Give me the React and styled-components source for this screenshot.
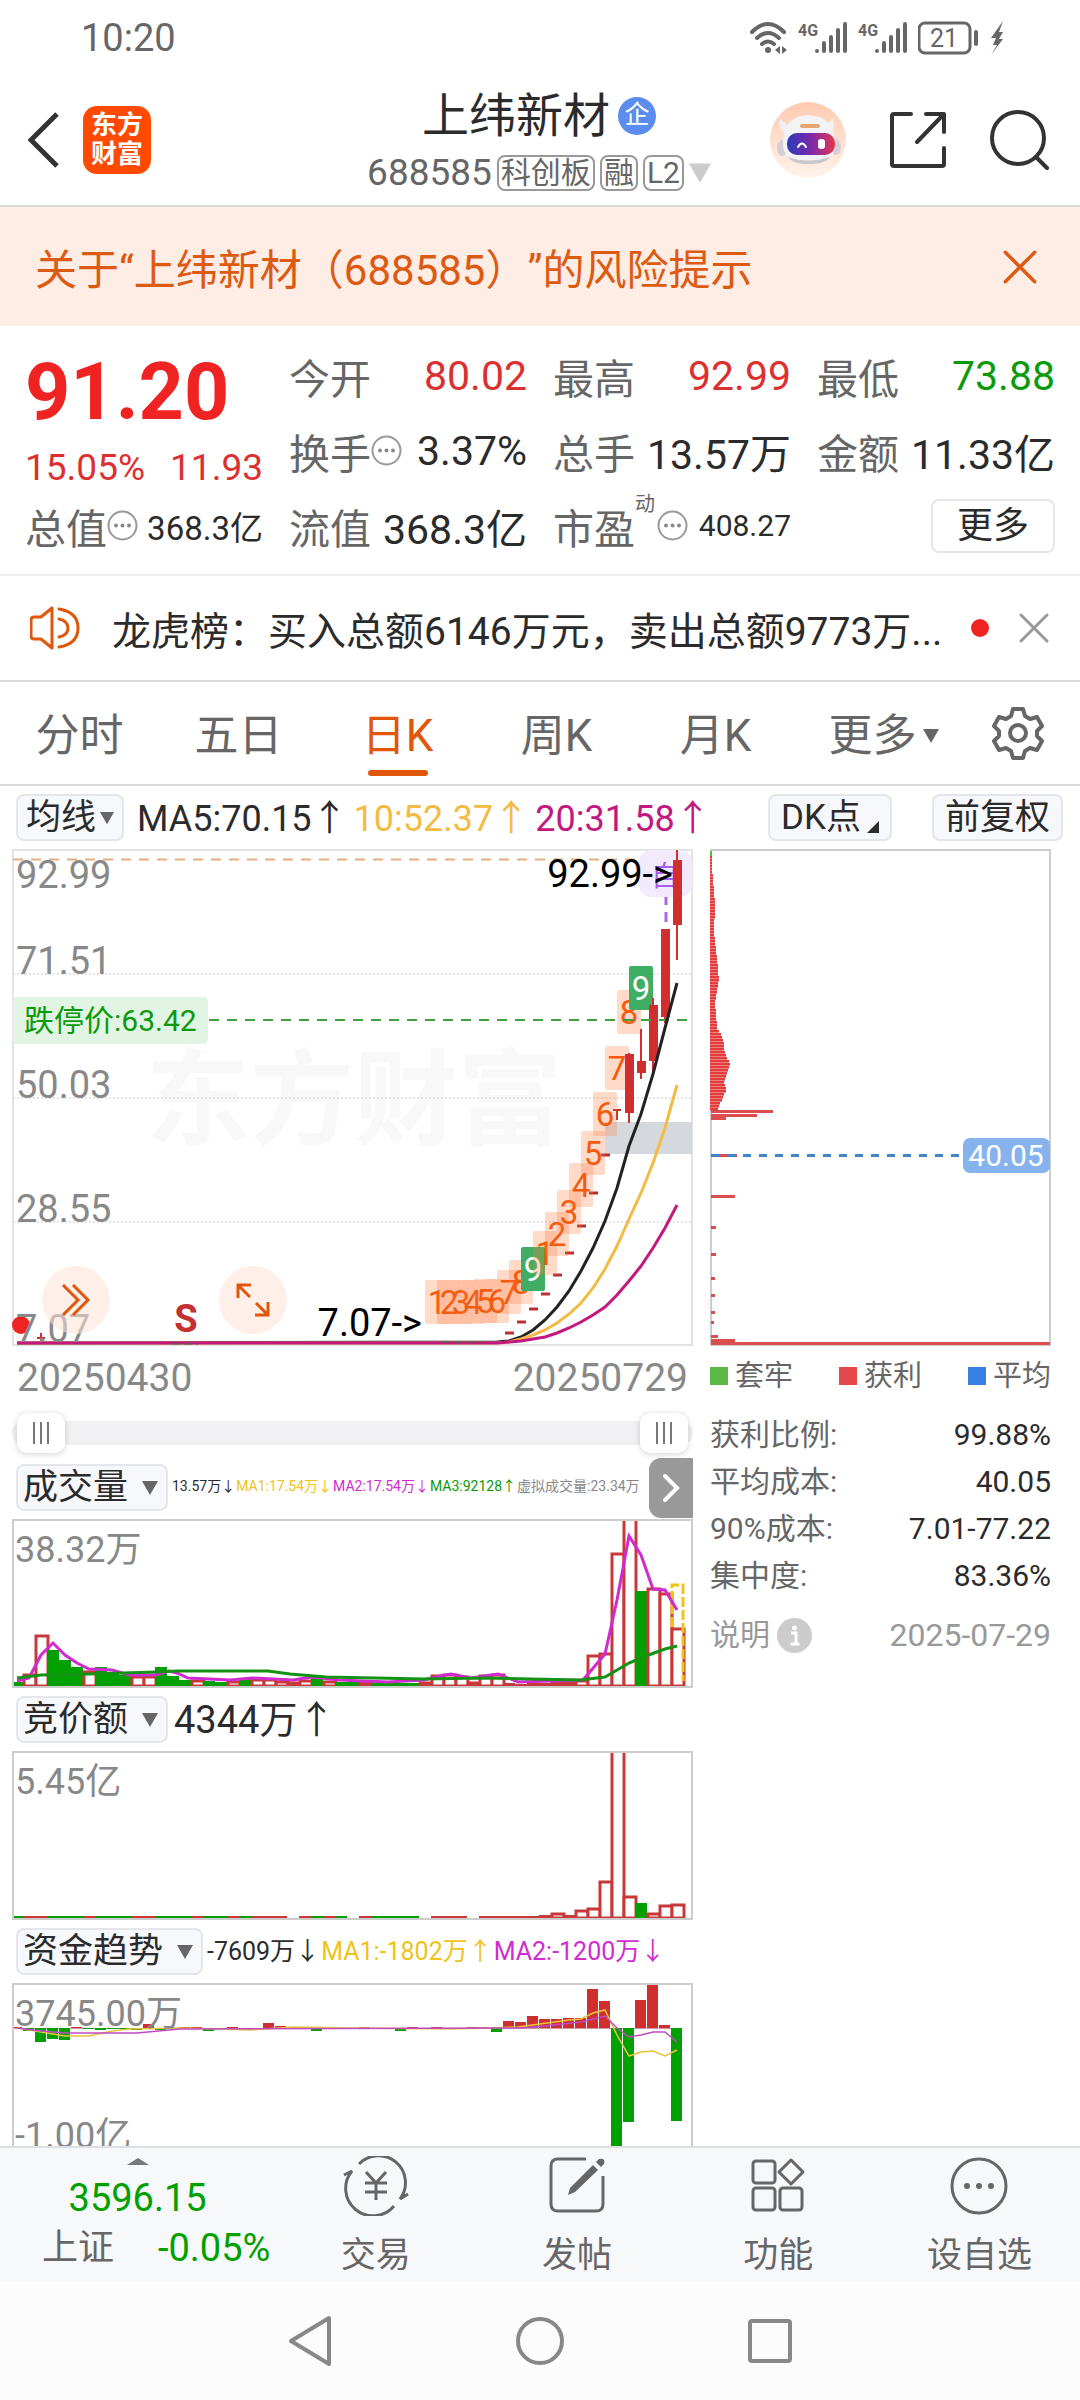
import React, { useState } from 'react';
import styled, { createGlobalStyle } from 'styled-components';

const GlobalStyle = createGlobalStyle`
  * {
    box-sizing: border-box;
  }

  body {
    margin: 0;
    background: #fff;
    color: #2b2b2b;
    font-family: Roboto, 'Noto Sans CJK SC', 'Liberation Sans', sans-serif;
    text-spacing-trim: space-all;
  }

  button,
  select {
    font-family: inherit;
    color: inherit;
    margin: 0;
    padding: 0;
    border: none;
    background: none;
    cursor: pointer;
  }

  svg {
    display: block;
    flex-shrink: 0;
  }
`;

const RED = '#d12e2e';
const GREEN = '#00a000';
const ORANGE = '#e0560b';
const YELLOW = '#efc31a';
const PURPLE = '#d02bd0';

const Shell = styled.div`
  display: flex;
  flex-direction: column;
  height: 100vh;
  overflow: hidden;
`;

const Scroll = styled.main`
  flex: 1;
  min-height: 0;
  overflow: hidden;
`;

// 상태바
const StatusBar = styled.div`
  display: flex;
  align-items: center;
  justify-content: space-between;
  height: 74px;
  padding: 2px 76px 0 81px;
  font-size: 38px;
  color: #666;
`;

const StatusIcons = styled.div`
  display: flex;
  align-items: center;
  gap: 10px;
`;

// 헤더
const Header = styled.header`
  display: grid;
  grid-template-columns: 1fr auto 1fr;
  align-items: center;
  height: 133px;
  padding: 0 30px 0 28px;
  border-bottom: 2px solid #d9d9d9;
`;

const HeaderLeft = styled.div`
  display: flex;
  align-items: center;
  gap: 24px;
`;

const HeaderRight = styled.div`
  display: flex;
  align-items: center;
  justify-content: flex-end;
  gap: 43px;
`;

const AppLogo = styled.a`
  display: flex;
  align-items: center;
  justify-content: center;
  width: 68px;
  height: 68px;
  border-radius: 14px;
  background: #ff4a00;
  color: #fff;
  font-size: 26px;
  line-height: 29px;
  font-weight: 700;
  text-align: center;
  text-decoration: none;
`;

const StockTitle = styled.div`
  display: flex;
  flex-direction: column;
  align-items: center;
  padding-top: 5px;
`;

const StockName = styled.h1`
  display: flex;
  align-items: center;
  gap: 8px;
  margin: 0;
  font-size: 47px;
  line-height: 62px;
  font-weight: 400;
`;

const Badge = styled.span`
  width: 38px;
  height: 38px;
  border-radius: 50%;
  background: #5b8dee;
  color: #fff;
  font-size: 25px;
  line-height: 36px;
  text-align: center;
`;

const StockCode = styled.div`
  display: flex;
  align-items: center;
  gap: 5px;
  font-size: 37px;
  line-height: 52px;
  color: #666;
`;

const Tag = styled.span`
  height: 36px;
  padding: 0 2px;
  border: 2px solid #999;
  border-radius: 8px;
  font-size: 30px;
  line-height: 32px;
`;

const IconButton = styled.button`
  display: flex;
  align-items: center;
  justify-content: center;
`;

// 위험 안내 배너
const Notice = styled.div`
  display: flex;
  align-items: center;
  justify-content: space-between;
  height: 119px;
  padding: 0 43px 0 35px;
  background: #fdede4;
  color: #dc5a12;
  font-size: 42px;
`;

// 시세
const QuoteGrid = styled.section`
  display: grid;
  grid-template-columns: repeat(4, 1fr);
  grid-auto-rows: 75px;
  column-gap: 26px;
  height: 250px;
  padding: 12px 25px 0;
  border-bottom: 2px solid #eee;
`;

const PriceBox = styled.div`
  grid-row: span 2;
  display: flex;
  flex-direction: column;
  justify-content: space-between;
  color: #f02323;
`;

const Price = styled.strong`
  font-size: 79px;
  line-height: 108px;
`;

const Change = styled.div`
  display: flex;
  justify-content: space-between;
  font-size: 37px;
  line-height: 40px;
  color: #dc3030;
`;

const QuoteCell = styled.div`
  display: flex;
  align-items: center;
  white-space: nowrap;
`;

const QuoteLabel = styled.span`
  position: relative;
  font-size: 41px;
  color: #666;
`;

const QuoteSup = styled.sup`
  position: absolute;
  left: 100%;
  top: -4px;
  font-size: 20px;
  line-height: 24px;
`;

const SupGap = styled.span`
  width: 22px;
`;

const QuoteValue = styled.span`
  margin-left: auto;
  font-size: ${(props) => props.$size || 41}px;
  color: ${(props) => props.$color || '#2b2b2b'};
`;

const MoreButton = styled.button`
  width: 124px;
  height: 54px;
  margin-left: auto;
  border: 2px solid #e6e6e6;
  border-radius: 8px;
  font-size: 36px;
  line-height: 48px;
`;

const NewsRow = styled.div`
  display: flex;
  align-items: center;
  height: 106px;
  padding: 0 31px 0 30px;
  border-bottom: 2px solid #d9d9d9;
`;

const NewsText = styled.a`
  flex: 1;
  min-width: 0;
  margin: 0 24px 0 32px;
  color: inherit;
  font-size: 39px;
  text-decoration: none;
  white-space: nowrap;
`;

const RedDot = styled.span`
  width: 18px;
  height: 18px;
  margin-right: 30px;
  border-radius: 50%;
  background: #f02323;
`;

// 기간 탭
const Tabs = styled.nav`
  display: grid;
  grid-template-columns: repeat(5, 159fr) 177fr 92fr;
  height: 104px;
  padding-right: 16px;
  border-bottom: 2px solid #d9d9d9;
`;

const Tab = styled.button`
  display: flex;
  flex-direction: column;
  align-items: center;
  justify-content: flex-end;
  gap: 4px;
  padding-bottom: 8px;
  font-size: 44px;
  line-height: 60px;
  color: ${(props) => (props.$active ? ORANGE : '#666')};

  &::after {
    content: '';
    width: 60px;
    height: 6px;
    border-radius: 3px;
    background: ${(props) => (props.$active ? ORANGE : 'transparent')};
  }
`;

const TabText = styled.span`
  display: flex;
  align-items: center;
  gap: 6px;
`;

const Toolbar = styled.div`
  display: flex;
  align-items: center;
  height: 63px;
  padding: 0 17px 0 16px;
  font-size: 36px;
`;

const chip = `
  height: 47px;
  border: 2px solid #e4e6eb;
  border-radius: 8px;
  background: #f7f8fb;
  font-size: 35px;
  line-height: 43px;
`;

const Chip = styled.button`
  ${chip}
  display: flex;
  align-items: center;
  gap: 6px;
  padding: 0 11px;
  white-space: nowrap;
`;

const ToolbarActions = styled.div`
  display: flex;
  gap: 40px;
  margin-left: auto;
`;

const SelectBox = styled.label`
  ${chip}
  display: flex;
  align-items: center;
  padding-right: 8px;
  gap: ${(props) => (props.$tight ? 3 : 13)}px;
`;

const Select = styled.select`
  appearance: none;
  padding-left: ${(props) => (props.$tight ? 8 : 5)}px;
  font-size: 35px;
  line-height: 43px;
  outline: none;
`;

const Readings = styled.div`
  display: flex;
  align-items: baseline;
  gap: ${(props) => props.$gap}px;
  margin-left: ${(props) => props.$start}px;
  padding-bottom: 6px;
  font-size: ${(props) => props.$size}px;
  white-space: nowrap;
`;

const Reading = styled.span`
  color: ${(props) => props.$color || '#2b2b2b'};
`;

// 차트 영역
const ChartArea = styled.section`
  display: grid;
  grid-template-columns: minmax(0, 681fr) minmax(0, 341fr);
  column-gap: 17px;
  padding: 0 29px 0 12px;
`;

const Chart = styled.svg`
  width: 100%;
  height: auto;
  overflow: hidden;
`;

const KLineBox = styled.div`
  position: relative;
`;

const FloatingTools = styled.div`
  position: absolute;
  left: 30px;
  bottom: 12px;
  display: flex;
  gap: 109px;
`;

const RoundButton = styled.button`
  display: flex;
  align-items: center;
  justify-content: center;
  width: 68px;
  height: 68px;
  border-radius: 50%;
  background: rgba(253, 228, 215, 0.55);
`;

const DateRow = styled.div`
  display: flex;
  justify-content: space-between;
  padding: 0 5px 0 5px;
  font-size: 39px;
  line-height: 64px;
  color: #888;
`;

const RangeBox = styled.div`
  position: relative;
  height: 46px;

  &::before {
    content: '';
    position: absolute;
    inset: 11px 0;
    border-radius: 12px;
    background: #f1f1f4;
  }
`;

const RangeInput = styled.input`
  position: absolute;
  left: 5px;
  top: 3px;
  width: calc(100% - 10px);
  height: 40px;
  margin: 0;
  appearance: none;
  background: none;
  pointer-events: none;

  &::-webkit-slider-thumb {
    appearance: none;
    width: 48px;
    height: 40px;
    border-radius: 10px;
    pointer-events: auto;
    box-shadow: 0 1px 6px rgba(0, 0, 0, 0.18);
    background:
      linear-gradient(#777, #777) 16px 9px / 2px 22px no-repeat,
      linear-gradient(#777, #777) 23px 9px / 2px 22px no-repeat,
      linear-gradient(#777, #777) 30px 9px / 2px 22px no-repeat,
      #fff;
  }
`;

const IndicatorHead = styled.div`
  display: flex;
  align-items: center;
  height: 63px;
  padding-left: 4px;
`;

const NextButton = styled.button`
  display: flex;
  align-items: center;
  justify-content: center;
  width: 44px;
  height: 60px;
  margin-left: auto;
  border-radius: 12px 0 0 12px;
  background: #999;
`;

// 매물대 패널
const Legend = styled.div`
  display: flex;
  justify-content: space-between;
  margin-bottom: 5px;
  font-size: 29px;
  line-height: 60px;
  color: #666;
`;

const LegendItem = styled.span`
  display: flex;
  align-items: center;
  gap: 7px;

  &::before {
    content: '';
    width: 18px;
    height: 18px;
    background: ${(props) => props.$color};
  }
`;

const CostTable = styled.table`
  width: 100%;
  border-collapse: collapse;
  font-size: 30px;
  line-height: 47px;

  th {
    padding: 0;
    font-weight: 400;
    text-align: left;
    color: #666;
  }

  td {
    padding: 0;
    text-align: right;
  }
`;

const CostFooter = styled.div`
  display: flex;
  align-items: center;
  gap: 7px;
  margin-top: 6px;
  font-size: 30px;
  line-height: 60px;
  color: #999;

  time {
    margin-left: auto;
    font-size: 32px;
  }
`;

// 하단 메뉴
const BottomNav = styled.nav`
  display: grid;
  grid-template-columns: 275fr repeat(4, 201fr);
  height: 135px;
  border-top: 2px solid #dcdfe4;
  background: #f7f8fa;
`;

const IndexBox = styled.button`
  display: flex;
  flex-direction: column;
  align-items: center;
  padding-top: 10px;
  color: ${GREEN};
`;

const IndexValue = styled.span`
  margin-top: 6px;
  font-size: 38px;
  line-height: 54px;
`;

const IndexRow = styled.span`
  display: flex;
  gap: 44px;
  padding-left: 37px;
  font-size: 38px;
  line-height: 46px;
`;

const Muted = styled.span`
  font-size: 36px;
  color: #666;
`;

const NavItem = styled.button`
  display: flex;
  flex-direction: column;
  align-items: center;
  justify-content: space-between;
  padding-top: 8px;
  font-size: 35px;
  line-height: 51px;
  color: #666;
`;

const SystemBar = styled.div`
  display: grid;
  grid-template-columns: repeat(3, 1fr);
  height: 119px;
  padding: 0 18%;
  background: #fcfcfc;
`;

const barX = (i) => 5 + i * 12;

const Caret = ({ size = 16, color = '#666' }) => (
  <svg width={size} height={size} viewBox='0 0 16 16'>
    <path d='M0 1h16L8 15z' fill={color} />
  </svg>
);

const MoreDots = () => (
  <svg width='31' height='31' viewBox='0 0 31 31'>
    <circle cx='15.5' cy='15.5' r='14' fill='none' stroke='#999' strokeWidth='2' />
    <g fill='#888'>
      <circle cx='9' cy='15.5' r='2' />
      <circle cx='15.5' cy='15.5' r='2' />
      <circle cx='22' cy='15.5' r='2' />
    </g>
  </svg>
);

const CloseIcon = ({ size, color }) => (
  <svg width={size} height={size} viewBox='0 0 30 30'>
    <path d='M2 2l26 26M28 2L2 28' stroke={color} strokeWidth='3' strokeLinecap='round' />
  </svg>
);

const Signal = () => (
  <svg width='50' height='34' viewBox='0 0 50 34'>
    <text x='0' y='15' fontSize='16' fontWeight='700' fill='#666'>
      4G
    </text>
    <path
      d='M19 30v0M26 30v-8M33 30v-14M40 30v-21M47 30v-27'
      stroke='#666'
      strokeWidth='4'
      strokeLinecap='round'
    />
  </svg>
);

const StatusGlyphs = () => (
  <StatusIcons>
    <svg width='38' height='34' viewBox='0 0 38 34'>
      <g fill='none' stroke='#666' strokeWidth='4' strokeLinecap='round'>
        <path d='M2 11Q18 -5 34 11' />
        <path d='M7 17Q18 7 29 17' />
        <path d='M12 23Q18 18 24 23' />
      </g>
      <circle cx='18' cy='29' r='3' fill='#666' />
      <path d='M25 29l5-4v8zM37 29l-5-4v8z' fill='#666' />
    </svg>
    <Signal />
    <Signal />
    <svg width='62' height='34' viewBox='0 0 62 34'>
      <rect x='1' y='2' width='51' height='30' rx='6' fill='none' stroke='#666' strokeWidth='3' />
      <path d='M58 11v12' stroke='#666' strokeWidth='4' strokeLinecap='round' />
      <text x='26' y='26' fontSize='25' textAnchor='middle' fill='#666'>
        21
      </text>
    </svg>
    <svg width='14' height='36' viewBox='0 0 14 36'>
      <path d='M13 1L1 18h5l-3 7h4L1 35l12-16H9l4-7H9z' fill='#666' />
    </svg>
  </StatusIcons>
);

const Robot = () => (
  <svg width='76' height='76' viewBox='0 0 76 76'>
    <defs>
      <linearGradient id='halo' x1='0' y1='0' x2='0' y2='1'>
        <stop offset='0' stopColor='#ffcab0' />
        <stop offset='1' stopColor='#fff3ec' />
      </linearGradient>
      <linearGradient id='visor' x1='0' y1='0' x2='1' y2='0'>
        <stop offset='0' stopColor='#2b3bbd' />
        <stop offset='0.5' stopColor='#7a2aa8' />
        <stop offset='1' stopColor='#e5364f' />
      </linearGradient>
    </defs>
    <circle cx='38' cy='38' r='38' fill='url(#halo)' />
    <path d='M11 16q-5 10 4 15l8-6q-9-2-12-9zM62 16q5 10-3 14l-8-6q8-1 11-8z' fill='#f1eff1' />
    <ellipse cx='12' cy='46' rx='5' ry='8' fill='#d2d0d6' />
    <ellipse cx='66' cy='45' rx='5' ry='8' fill='#d2d0d6' />
    <path d='M13 41q0-27 25-28 26 1 27 27 2 21-27 21-26-1-25-20z' fill='#f3f2f5' />
    <path d='M18 55q20 7 42 0-4 7-21 7t-21-7z' fill='#c9c7ce' />
    <rect x='30' y='22' width='20' height='4' rx='2' fill='#e9a56f' />
    <rect x='17' y='31' width='48' height='22' rx='10' fill='url(#visor)' />
    <path d='M28 45q4-7 8 0' fill='none' stroke='#fff' strokeWidth='2' strokeLinecap='round' />
    <rect x='48' y='37' width='7' height='10' rx='3' fill='#fff' />
  </svg>
);

const candles = [
  { i: 51, top: 205, bottom: 264, high: 204, low: 274 },
  { i: 52, top: 212, bottom: 224, high: 180, low: 230 },
  { i: 53, top: 156, bottom: 212, high: 149, low: 223 },
  { i: 54, top: 80, bottom: 168, high: 80, low: 174 },
  { i: 55, top: 11, bottom: 76, high: 1, low: 111 },
];

const limitUps = [484, 473, 460, 445, 426, 404, 377, 344, 306];

const marks = [
  [35, 1, 431], [36, 2, 431], [37, 3, 431], [38, 4, 431], [39, 5, 430], [40, 6, 430],
  [41, 7, 421], [42, 8, 411], [43, 9, 398], [44, 1, 382], [45, 2, 363], [46, 3, 341],
  [47, 4, 314], [48, 5, 282], [49, 6, 243], [50, 7, 197], [51, 8, 141], [52, 9, 117],
];

const ma5 = [
  493, 492, 488, 481, 471, 458, 442, 422, 399, 372, 339, 297, 265, 225, 179, 134,
];
const ma10 = [
  494, 493, 490, 486, 481, 474, 465, 454, 439, 420, 397, 370, 344, 314, 279, 236,
];
const ma20 = [
  494, 493, 492, 490, 488, 484, 479, 473, 466, 458, 446, 432, 417, 399, 379, 356,
];

const tailPoints = (list) =>
  `5,494 ${list.map((y, n) => `${barX(40 + n)},${y}`).join(' ')}`;

const KLine = () => (
  <Chart viewBox='0 0 681 497'>
    <rect x='1' y='1' width='679' height='495' fill='#fff' stroke='#e2e2e2' strokeWidth='2' />
    <text
      x='342'
      y='288'
      fontSize='104'
      fontWeight='700'
      textAnchor='middle'
      fill='#f8f8f8'
    >
      东方财富
    </text>
    <g stroke='#e3e3e3' strokeWidth='2' strokeDasharray='2 2'>
      <path d='M1 125H680M1 249H680M1 373H680' />
    </g>
    <path d='M1 10.5H680' stroke='#e2b07e' strokeWidth='2' strokeDasharray='10 8' />
    <rect x='593' y='273' width='87' height='32' fill='#d5d8dd' />

    <g fontSize='38' fill='#888'>
      <text x='4' y='39'>92.99</text>
      <text x='4' y='125'>71.51</text>
      <text x='4' y='249'>50.03</text>
      <text x='4' y='373'>28.55</text>
    </g>

    <path d='M654 12V80' stroke='#ae67ea' strokeWidth='3' strokeDasharray='10 7' />
    <rect x='627' y='1' width='53' height='47' rx='12' fill='#f3eafe' />
    <text x='653' y='37' fontSize='28' textAnchor='middle' fill='#a95cf0'>
      自
    </text>

    {limitUps.map((y, n) => (
      <path key={y} d={`M${barX(41 + n) - 4} ${y}h9`} stroke='#b8302f' strokeWidth='3' />
    ))}
    <path d='M601 261h8M605 261v10' stroke='#b8302f' strokeWidth='2' />

    {marks.map(([i, n, y]) => (
      <g key={i}>
        <rect
          x={barX(i) - 12}
          y={y}
          width='24'
          height='44'
          rx='2'
          fill={n === 9 ? '#3fae62' : '#ff7a3c'}
          fillOpacity={n === 9 ? 1 : 0.28}
        />
        <text
          x={barX(i)}
          y={y + 34}
          fontSize='33'
          textAnchor='middle'
          fill={n === 9 ? '#fff' : '#f4590c'}
        >
          {n}
        </text>
      </g>
    ))}

    {candles.map((c) => (
      <g key={c.i} fill={RED}>
        <rect x={barX(c.i) - 1} y={c.high} width='2' height={c.low - c.high} />
        <rect x={barX(c.i) - 4} y={c.top} width='9' height={c.bottom - c.top} />
      </g>
    ))}

    <path d='M197 171H680' stroke='#3f9f3f' strokeWidth='2' strokeDasharray='10 8' />
    <path d='M1 148h190q5 0 5 5v37q0 5-5 5H1z' fill='#e2f4e4' />
    <text x='12' y='182' fontSize='30' fill='#0a9a0a'>
      跌停价:63.42
    </text>

    <g fill='none' strokeWidth='3'>
      <polyline points={tailPoints(ma5)} stroke='#222' />
      <polyline points={tailPoints(ma10)} stroke='#f4bb44' />
      <polyline points={tailPoints(ma20)} stroke='#c2187f' />
    </g>
    <path d='M160 495h26M430 493h40' stroke='#3a7a3a' strokeWidth='1' strokeDasharray='8 4' />

    <text x='661' y='38' fontSize='38' textAnchor='end'>
      92.99-&gt;
    </text>
    <text x='410' y='487' fontSize='38' textAnchor='end'>
      7.07-&gt;
    </text>
    <text x='174' y='483' fontSize='38' fontWeight='700' textAnchor='middle' fill='#c43131'>
      S
    </text>
    <circle cx='9' cy='476' r='9' fill='#f02323' />
    <path d='M29 484v8M25 489h8' stroke={RED} strokeWidth='2' />
    <text x='4' y='493' fontSize='38' fill='#888'>
      7.07
    </text>
  </Chart>
);

// [y, 너비] 기준점 사이를 3px 간격으로 채운다
const profileKeys = [
  [4, 1], [13, 1], [50, 4], [79, 3], [126, 8], [148, 4], [175, 6], [185, 12],
  [201, 14], [211, 19], [229, 13], [237, 15], [258, 6],
];

const profile = [];
for (let y = 4; y < 258; y += 3) {
  const k = profileKeys.findIndex(([ky]) => ky > y);
  const [y1, w1] = profileKeys[k - 1];
  const [y2, w2] = profileKeys[k];
  profile.push([y, Math.round(w1 + ((w2 - w1) * (y - y1)) / (y2 - y1))]);
}

const profileSpikes = [
  [262, 62], [266, 46], [269, 15], [306, 26], [347, 24], [378, 5], [405, 5],
  [429, 4], [446, 4], [463, 4], [473, 3], [487, 7], [491, 24], [494, 339],
];

const CostChart = () => (
  <Chart viewBox='0 0 341 497'>
    <rect x='1' y='1' width='339' height='495' fill='#fff' stroke='#ccc' strokeWidth='2' />
    <path d='M1 2v9' stroke='#5cb946' strokeWidth='2' />
    {profile.map(([y, w]) => (
      <g key={y}>
        <rect x='0' y={y + 3} width={w + 1} height='3' fill='#f08080' />
        <rect x='0' y={y + 3} width={w + 1} height='2' fill='#e23c3c' />
      </g>
    ))}
    {profileSpikes.map(([y, w]) => (
      <rect key={y} x='1' y={y - 1} width={w} height='3' fill='#dc4e4e' />
    ))}
    <path d='M1 306.5H250' stroke='#3d86cd' strokeWidth='3' strokeDasharray='8 8' />
    <rect x='253' y='289' width='87' height='35' rx='7' fill='#86b3ee' />
    <text x='296' y='317' fontSize='30' textAnchor='middle' fill='#fff'>
      40.05
    </text>
  </Chart>
);

const Bar = ({ i, h, up, height = 168 }) =>
  up && h > 4 ? (
    <rect
      x={barX(i) - 5}
      y={height - h + 1}
      width='12'
      height={h - 2}
      fill='#fff'
      stroke='#c83838'
      strokeWidth='3'
    />
  ) : (
    <rect
      x={barX(i) - 6}
      y={height - h}
      width='12'
      height={h}
      fill={up ? '#c83838' : GREEN}
    />
  );

// 양수 = 상승(빨강), 음수 = 하락(초록)
const volumes = [
  -5, 13, 52, -37, -27, -20, 16, -20, -13, -12, 11, 11, -20, -11, -7, 7, -6, -5, 6, -8,
  8, 8, 6, 5, 7, -10, 6, -5, -5, 5, -4, -4, -4, -4, 5, 12, 13, 11, 5, 12,
  13, 4, 3, 4, 4, 5, 5, 7, 32, 34, 134, 180, -96, 99, 94, 59,
];

const auctions = [
  -3, 3, 3, -3, -3, -3, 3, -3, -3, -3, 3, 3, -3, -3, -3, 3, -3, -3, 3, -3,
  3, 3, 3, 0, 3, -3, 3, -3, 0, 3, -3, -3, -3, -3, 0, 3, 3, 3, 0, 3,
  3, 3, 3, 3, 4, 6, 4, 9, 11, 38, 180, 23, -16, 6, 14, 15,
];

const flows = [
  1, -3, -14, -11, -12, 1, -1, -2, -1, -1, -2, 4, -2, -1, 1, 1, -3, 0, 1, -2,
  0, 5, 2, 0, 0, -3, 1, 0, 0, 1, 0, 0, -3, 1, 0, 1, 0, 0, 1, 1,
  -4, 7, 6, 12, 9, 9, 10, 10, 39, 27, -130, -94, 28, 46, 3, -93,
];

const SubChart = ({ label, children }) => (
  <Chart viewBox='0 0 681 169'>
    {children}
    <rect x='1' y='1' width='679' height='167' fill='none' stroke='#ccc' strokeWidth='2' />
    <text x='3' y='43' fontSize='36' fill='#888'>
      {label}
    </text>
  </Chart>
);

const IndicatorSelect = ({ label, name }) => (
  <SelectBox>
    <Select aria-label={label} defaultValue={name}>
      <option value={name}>{name}</option>
    </Select>
    <Caret />
  </SelectBox>
);

const quotes = [
  { label: '今开', value: '80.02', color: '#dc3030' },
  { label: '最高', value: '92.99', color: '#dc3030' },
  { label: '最低', value: '73.88', color: '#0a9a0a' },
  { label: '换手', value: '3.37%', dots: true },
  { label: '总手', value: '13.57万' },
  { label: '金额', value: '11.33亿' },
  { label: '总值', value: '368.3亿', dots: true, size: 33 },
  { label: '流值', value: '368.3亿' },
  { label: '市盈', sup: '动', value: '408.27', dots: true, size: 30 },
];

const costs = [
  ['获利比例:', '99.88%'],
  ['平均成本:', '40.05'],
  ['90%成本:', '7.01-77.22'],
  ['集中度:', '83.36%'],
];

const periods = ['分时', '五日', '日K', '周K', '月K'];

const App = () => {
  const [period, setPeriod] = useState('日K');
  const [showNotice, setShowNotice] = useState(true);
  const [showNews, setShowNews] = useState(true);
  const [start, setStart] = useState(0);
  const [end, setEnd] = useState(100);

  return (
    <Shell>
      <GlobalStyle />
      <StatusBar>
        <span>10:20</span>
        <StatusGlyphs />
      </StatusBar>

      <Header>
        <HeaderLeft>
          <IconButton aria-label='返回'>
            <svg width='31' height='56' viewBox='0 0 31 56'>
              <path d='M29 2L3 28l26 26' fill='none' stroke='#333' strokeWidth='5' />
            </svg>
          </IconButton>
          <AppLogo href='#home'>
            东方
            <br />
            财富
          </AppLogo>
        </HeaderLeft>
        <StockTitle>
          <StockName>
            上纬新材<Badge>企</Badge>
          </StockName>
          <StockCode>
            688585
            <Tag>科创板</Tag>
            <Tag>融</Tag>
            <Tag>L2</Tag>
            <Caret size={22} color='#ccc' />
          </StockCode>
        </StockTitle>
        <HeaderRight>
          <IconButton aria-label='助手'>
            <Robot />
          </IconButton>
          <IconButton aria-label='分享'>
            <svg width='58' height='58' viewBox='0 0 58 58'>
              <path
                d='M22 3H5q-2 0-2 2v48q0 2 2 2h48q2 0 2-2V37M37 3h18v18M54 4L28 31'
                fill='none'
                stroke='#333'
                strokeWidth='4'
                strokeLinecap='round'
                strokeLinejoin='round'
              />
            </svg>
          </IconButton>
          <IconButton aria-label='搜索'>
            <svg width='60' height='60' viewBox='0 0 60 60'>
              <g fill='none' stroke='#333' strokeWidth='4' strokeLinecap='round'>
                <circle cx='28' cy='28' r='26' />
                <path d='M46 47l11 11' />
              </g>
            </svg>
          </IconButton>
        </HeaderRight>
      </Header>

      <Scroll>
        {showNotice && (
          <Notice>
            <span>关于“上纬新材（688585）”的风险提示</span>
            <IconButton aria-label='关闭提示' onClick={() => setShowNotice(false)}>
              <CloseIcon size={34} color='#dc5a12' />
            </IconButton>
          </Notice>
        )}

        <QuoteGrid>
          <PriceBox>
            <Price>91.20</Price>
            <Change>
              <span>15.05%</span>
              <span>11.93</span>
            </Change>
          </PriceBox>
          {quotes.map((q) => (
            <QuoteCell key={q.label}>
              <QuoteLabel>
                {q.label}
                {q.sup && <QuoteSup>{q.sup}</QuoteSup>}
              </QuoteLabel>
              {q.sup && <SupGap />}
              {q.dots && <MoreDots />}
              <QuoteValue $color={q.color} $size={q.size}>
                {q.value}
              </QuoteValue>
            </QuoteCell>
          ))}
          <QuoteCell>
            <MoreButton>更多</MoreButton>
          </QuoteCell>
        </QuoteGrid>

        {showNews && (
          <NewsRow>
            <svg width='50' height='44' viewBox='0 0 50 44'>
              <g fill='none' stroke={ORANGE} strokeWidth='3' strokeLinejoin='round'>
                <path d='M22 2L11 11H4q-3 0-3 3v16q0 3 3 3h7l11 9z' />
                <path d='M29 3q19 3 19 19T29 41M29 13q9 2 9 9t-9 9' strokeLinecap='round' />
              </g>
            </svg>
            <NewsText href='#news'>
              龙虎榜：买入总额6146万元，卖出总额9773万...
            </NewsText>
            <RedDot />
            <IconButton aria-label='关闭消息' onClick={() => setShowNews(false)}>
              <CloseIcon size={30} color='#999' />
            </IconButton>
          </NewsRow>
        )}

        <Tabs>
          {periods.map((p) => (
            <Tab key={p} $active={p === period} onClick={() => setPeriod(p)}>
              <TabText>{p}</TabText>
            </Tab>
          ))}
          <Tab>
            <TabText>
              更多
              <Caret />
            </TabText>
          </Tab>
          <IconButton aria-label='设置'>
            <svg width='54' height='54' viewBox='0 0 54 54'>
              <g fill='none' stroke='#666' strokeWidth='4' strokeLinejoin='round'>
                <path d='M22 3h10l2 7 5 3 7-2 5 9-5 5v5l5 5-5 9-7-2-5 3-2 7H22l-2-7-5-3-7 2-5-9 5-5v-5l-5-5 5-9 7 2 5-3z' />
                <circle cx='27' cy='27' r='8' />
              </g>
            </svg>
          </IconButton>
        </Tabs>

        <Toolbar>
          <SelectBox $tight>
            <Select $tight aria-label='主图指标' defaultValue='均线'>
              <option value='均线'>均线</option>
            </Select>
            <Caret size={14} />
          </SelectBox>
          <Readings $size={36} $gap={6} $start={13}>
            <Reading>MA5:70.15↑</Reading>
            <Reading $color='#f4bb44'>10:52.37↑</Reading>
            <Reading $color='#c2187f'>20:31.58↑</Reading>
          </Readings>
          <ToolbarActions>
            <Chip>
              DK点
              <svg width='12' height='30' viewBox='0 0 12 30'>
                <path d='M12 18v12H0z' fill='#2b2b2b' />
              </svg>
            </Chip>
            <Chip>前复权</Chip>
          </ToolbarActions>
        </Toolbar>

        <ChartArea>
          <div>
            <KLineBox>
              <KLine />
              <FloatingTools>
                <RoundButton aria-label='展开'>
                  <svg width='30' height='32' viewBox='0 0 30 32'>
                    <path d='M2 1l15 15L2 31M12 1l15 15-15 15' fill='none' stroke={ORANGE} strokeWidth='3' />
                  </svg>
                </RoundButton>
                <RoundButton aria-label='全屏'>
                  <svg width='34' height='34' viewBox='0 0 34 34'>
                    <path
                      d='M2 15V2h13M2 2l12 12M32 19v13H19M32 32L20 20'
                      fill='none'
                      stroke={ORANGE}
                      strokeWidth='3'
                    />
                  </svg>
                </RoundButton>
              </FloatingTools>
            </KLineBox>
            <DateRow>
              <span>20250430</span>
              <span>20250729</span>
            </DateRow>
            <RangeBox>
              <RangeInput
                type='range'
                aria-label='开始日期'
                value={start}
                onChange={(e) => setStart(Number(e.target.value))}
              />
              <RangeInput
                type='range'
                aria-label='结束日期'
                value={end}
                onChange={(e) => setEnd(Number(e.target.value))}
              />
            </RangeBox>

            <IndicatorHead>
              <IndicatorSelect label='副图一' name='成交量' />
              <Readings $size={14} $gap={1} $start={4}>
                <Reading>13.57万↓</Reading>
                <Reading $color={YELLOW}>MA1:17.54万↓</Reading>
                <Reading $color={PURPLE}>MA2:17.54万↓</Reading>
                <Reading $color='#0a9a0a'>MA3:92128↑</Reading>
                <Reading $color='#888'>虚拟成交量:23.34万</Reading>
              </Readings>
              <NextButton aria-label='下一组'>
                <svg width='18' height='30' viewBox='0 0 18 30'>
                  <path d='M3 3l12 12L3 27' fill='none' stroke='#fff' strokeWidth='4' strokeLinecap='round' />
                </svg>
              </NextButton>
            </IndicatorHead>
            <SubChart label='38.32万'>
              {volumes.map((v, i) => (
                <Bar key={i} i={i} h={Math.abs(v)} up={v > 0} />
              ))}
              <path
                d='M660 108V66h11v96'
                fill='none'
                stroke={YELLOW}
                strokeWidth='3'
                strokeDasharray='10 3'
              />
              <g fill='none' strokeWidth='3'>
                <polyline
                  stroke={PURPLE}
                  points='5,162 17,159 29,136 41,124 53,136 65,144 77,150 100,151 117,156 144,156 157,152 165,154 176,159 218,161 240,159 281,161 300,158 327,161 376,163 412,161 428,157 439,155 459,159 486,155 506,163 571,161 593,135 605,81 617,17 629,36 641,70 653,71 665,91'
                />
                <polyline
                  stroke='#149214'
                  points='5,159 29,156 77,155 144,153 165,152 256,152 278,155 314,158 412,160 470,159 568,161 593,158 617,144 631,138 653,130 665,127'
                />
              </g>
            </SubChart>

            <IndicatorHead>
              <IndicatorSelect label='副图二' name='竞价额' />
              <Readings $size={38} $gap={6} $start={6}>
                <Reading>4344万↑</Reading>
              </Readings>
            </IndicatorHead>
            <SubChart label='5.45亿'>
              {auctions.map((v, i) =>
                v === 0 ? null : <Bar key={i} i={i} h={Math.abs(v)} up={v > 0} />
              )}
            </SubChart>

            <IndicatorHead>
              <IndicatorSelect label='副图三' name='资金趋势' />
              <Readings $size={25} $gap={1} $start={4}>
                <Reading>-7609万↓</Reading>
                <Reading $color={YELLOW}>MA1:-1802万↑</Reading>
                <Reading $color={PURPLE}>MA2:-1200万↓</Reading>
              </Readings>
            </IndicatorHead>
            <SubChart label='3745.00万'>
              <path d='M0 45.5h660' stroke='#c9a' strokeWidth='1' />
              {flows.map((v, i) => (
                <rect
                  key={i}
                  x={barX(i) - 6}
                  y={v > 0 ? 45 - v : 45}
                  width='11'
                  height={Math.abs(v)}
                  fill={v > 0 ? RED : GREEN}
                />
              ))}
              <g fill='none' strokeWidth='1.5'>
                <polyline
                  stroke='#e8c53a'
                  points='5,45 29,49 53,53 77,53 100,48 117,46 168,45 240,47 281,44 340,45 440,46 506,44 557,37 569,36 581,30 593,27 605,52 617,73 629,69 641,68 653,73 665,67'
                />
                <polyline
                  stroke='#c04bc4'
                  points='5,45 29,48 53,50 125,50 168,46 510,45 533,43 569,39 593,33 605,45 617,54 629,52 641,49 653,49 665,59'
                />
              </g>
              <text x='3' y='165' fontSize='36' fill='#888'>
                -1.00亿
              </text>
            </SubChart>
          </div>

          <aside>
            <CostChart />
            <Legend>
              <LegendItem $color='#5cb946'>套牢</LegendItem>
              <LegendItem $color='#e64949'>获利</LegendItem>
              <LegendItem $color='#3580e0'>平均</LegendItem>
            </Legend>
            <CostTable>
              <tbody>
                {costs.map(([name, value]) => (
                  <tr key={name}>
                    <th scope='row'>{name}</th>
                    <td>{value}</td>
                  </tr>
                ))}
              </tbody>
            </CostTable>
            <CostFooter>
              说明
              <svg width='35' height='35' viewBox='0 0 35 35'>
                <circle cx='17.5' cy='17.5' r='17.5' fill='#ccc' />
                <circle cx='17.5' cy='10' r='2.5' fill='#fff' />
                <path d='M14 15h5v11M13.5 26h9' fill='none' stroke='#fff' strokeWidth='3' />
              </svg>
              <time>2025-07-29</time>
            </CostFooter>
          </aside>
        </ChartArea>
      </Scroll>

      <BottomNav>
        <IndexBox>
          <svg width='22' height='7' viewBox='0 0 22 7'>
            <path d='M11 0l11 7H0z' fill='#777' />
          </svg>
          <IndexValue>3596.15</IndexValue>
          <IndexRow>
            <Muted>上证</Muted>
            <span>-0.05%</span>
          </IndexRow>
        </IndexBox>
        <NavItem>
          <svg width='66' height='60' viewBox='0 0 66 60'>
            <g fill='none' stroke='#666' strokeWidth='3'>
              <path d='M16 8A27 27 0 0 1 57 43l8-5' />
              <path d='M51 50A27 27 0 0 1 9 15l-8 4' />
              <path d='M23 16l10 11 10-11M33 26v18M22 27h22M22 36h22' />
            </g>
          </svg>
          交易
        </NavItem>
        <NavItem>
          <svg width='58' height='60' viewBox='0 0 58 60'>
            <path
              d='M38 3H10q-7 0-7 7v38q0 7 7 7h38q7 0 7-7V20'
              fill='none'
              stroke='#666'
              strokeWidth='3'
            />
            <path d='M45 9l5 5-23 22-7 3 2-7zM48 6l3-3q4-1 5 1t0 4l-3 3z' fill='#666' />
          </svg>
          发帖
        </NavItem>
        <NavItem>
          <svg width='56' height='60' viewBox='0 0 56 60'>
            <g fill='none' stroke='#666' strokeWidth='3' strokeLinejoin='round'>
              <rect x='3' y='5' width='22' height='22' rx='3' />
              <rect x='3' y='32' width='22' height='22' rx='3' />
              <rect x='30' y='32' width='22' height='22' rx='3' />
              <path d='M41 4l12 12-12 12-12-12z' />
            </g>
          </svg>
          功能
        </NavItem>
        <NavItem>
          <svg width='58' height='60' viewBox='0 0 58 60'>
            <circle cx='29' cy='30' r='27' fill='none' stroke='#666' strokeWidth='3' />
            <g fill='#666'>
              <circle cx='17' cy='30' r='3' />
              <circle cx='29' cy='30' r='3' />
              <circle cx='41' cy='30' r='3' />
            </g>
          </svg>
          设自选
        </NavItem>
      </BottomNav>

      <SystemBar>
        <IconButton aria-label='系统返回'>
          <svg width='44' height='52' viewBox='0 0 44 52'>
            <path d='M41 3v46L3 26z' fill='none' stroke='#888' strokeWidth='4' strokeLinejoin='round' />
          </svg>
        </IconButton>
        <IconButton aria-label='主屏幕'>
          <svg width='50' height='50' viewBox='0 0 50 50'>
            <circle cx='25' cy='25' r='22' fill='none' stroke='#888' strokeWidth='4' />
          </svg>
        </IconButton>
        <IconButton aria-label='最近任务'>
          <svg width='46' height='46' viewBox='0 0 46 46'>
            <rect x='3' y='3' width='40' height='40' rx='2' fill='none' stroke='#888' strokeWidth='4' />
          </svg>
        </IconButton>
      </SystemBar>
    </Shell>
  );
};

export default App;
